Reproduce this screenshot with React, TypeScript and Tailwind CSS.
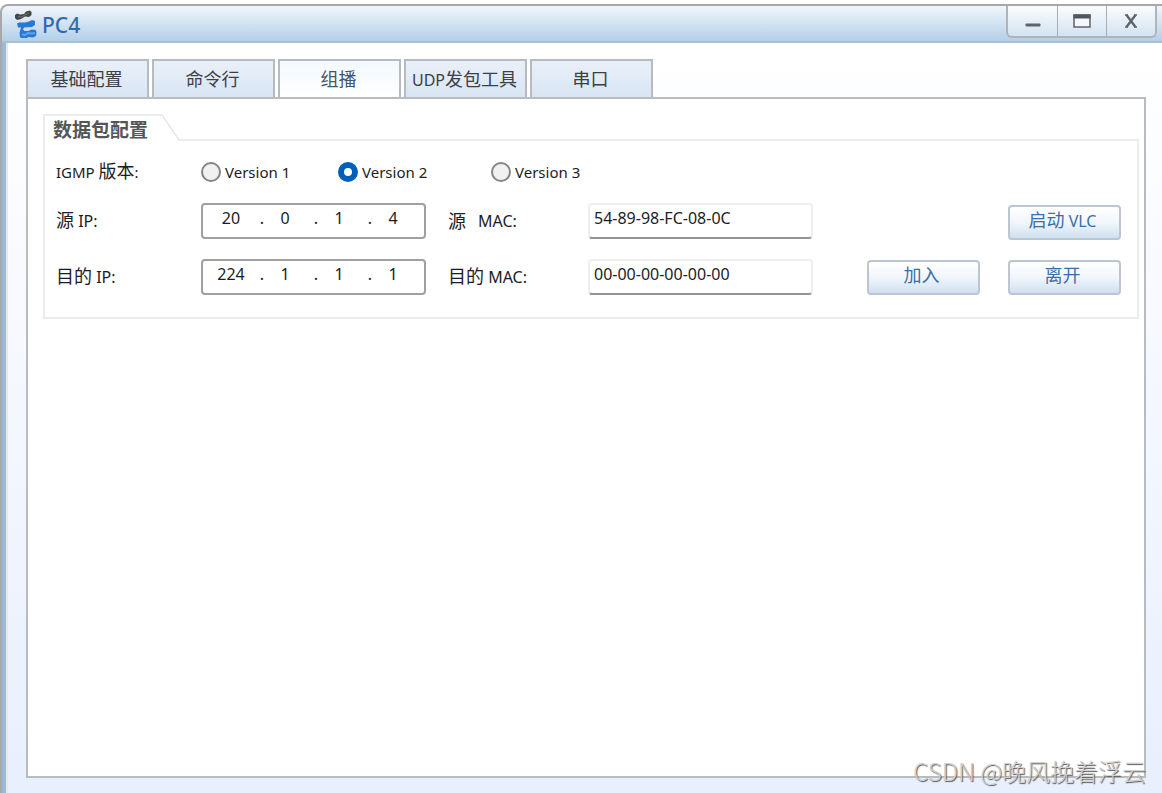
import { useState, type ReactNode } from "react";

const TABS = ["基础配置", "命令行", "组播", "UDP发包工具", "串口"];
const VERSIONS = ["Version 1", "Version 2", "Version 3"];

function Logo() {
  return (
    <svg width="24" height="28" viewBox="0 0 24 28" aria-hidden="true">
      <path d="M1 5 3 3.500l3 1 4-.5 2-2.500L16 .5l1.500 1.500v3L15 7l-4-.5L7 9 3 10 1 8z" fill="#474747" />
      <path d="m4 6.500 4 .5 4-3 3-.5" fill="none" stroke="#707070" strokeWidth="1" />
      <path d="M3 13.500 5 12.500h6l4-1 3-1.500 3 1v4l-3 2-8 .5-1 2 1.500 1.500h4l3-1.500 4 .5 1 2-.5 4-3 1.500-5-.5-2 2H8l-2-2-.5-4L7 17.500H4z" fill="#2a78d4" />
      <path d="m8 24.500 3 .500 3-2 4 .500 3-.5" fill="none" stroke="#5aa6f5" strokeWidth="2" />
    </svg>
  );
}

function Cjk({ children }: { children: ReactNode }) {
  return <span className="text-lg leading-5">{children}</span>;
}

function CaptionButton({ label, children }: { label: string; children: ReactNode }) {
  return (
    <button
      type="button"
      aria-label={label}
      className="flex w-[49px] items-center justify-center border-l border-[#a9acb0] first:border-l-0"
    >
      {children}
    </button>
  );
}

function ActionButton({ children }: { children: ReactNode }) {
  return (
    <button
      type="button"
      className="h-[35px] w-[113px] rounded-sm border-2 border-[#bcc5d2] bg-linear-to-b from-white via-[#f1f6fb] to-[#cfe0f0] pr-1 pb-1 text-base leading-5 text-[#3a6ea8]"
    >
      {children}
    </button>
  );
}

function IpInput({ label, value }: { label: string; value: string }) {
  const [parts, setParts] = useState(value.split("."));

  return (
    <div
      role="group"
      aria-label={label}
      className="flex h-9 w-[225px] items-center rounded-sm border-2 border-[#a0a0a0] bg-white pb-1.5 pl-[7px] text-base"
    >
      {parts.map((part, i) => (
        <div key={i} className="flex items-center">
          {i > 0 ? <span className="w-3 text-right">.</span> : null}
          <input
            aria-label={`${label} ${i + 1}`}
            value={part}
            maxLength={3}
            onChange={(e) => setParts(parts.map((p, n) => (n === i ? e.target.value : p)))}
            className="w-[42px] text-center outline-none"
          />
        </div>
      ))}
    </div>
  );
}

function MacInput({ id, value }: { id: string; value: string }) {
  return (
    <input
      id={id}
      defaultValue={value}
      className="h-9 w-[225px] rounded-sm border-2 border-[#efefef] border-b-[#949494] bg-white pb-1.5 pl-1 text-base outline-none"
    />
  );
}

export default function App() {
  const [tab, setTab] = useState(2);
  const [version, setVersion] = useState(1);

  return (
    <div className="relative flex min-h-screen flex-col bg-white pt-1 font-['Noto_Sans','Noto_Sans_CJK_SC',sans-serif] text-[15px] text-[#1c1c24]">
      <div className="flex flex-1 flex-col rounded-tl-lg border-t-2 border-l-2 border-[#a8a8a8] bg-[#9bb9d2]">
        <header className="flex h-[37px] justify-between rounded-tl-md border-b-2 border-[#a9bfd2] bg-linear-to-b from-[#f1f5fb] to-[#b3d0e8] pr-[5px]">
          <div className="flex items-center gap-1 pl-3">
            <Logo />
            <h1 className="pt-0.5 text-[21px] leading-8 font-medium text-[#2f6cae]">PC4</h1>
          </div>
          <div className="flex h-8 rounded-b-md border-2 border-t-0 border-[#b0b3b8] bg-linear-to-b from-[#fbfcfe] to-[#d3e3f1]">
            <CaptionButton label="最小化">
              <svg width="16" height="14" viewBox="0 0 16 14">
                <rect x="0.5" y="9.5" width="15" height="3" rx="1" fill="#5e636b" />
              </svg>
            </CaptionButton>
            <CaptionButton label="最大化">
              <svg width="18" height="14" viewBox="0 0 18 14">
                <rect x="1" y="1" width="16" height="12" fill="#f4f7fb" stroke="#5e636b" strokeWidth="1.5" />
                <rect x="0.5" y="0.5" width="17" height="4" fill="#50545b" />
              </svg>
            </CaptionButton>
            <CaptionButton label="关闭">
              <svg width="14" height="14" viewBox="0 0 14 14">
                <path d="M1 1h3M10 1h3M1 13h3M10 13h3" stroke="#5e636b" strokeWidth="1.5" />
                <path d="m2.5 1 9 12M11.500 1l-9 12" stroke="#5e636b" strokeWidth="2.4" />
              </svg>
            </CaptionButton>
          </div>
        </header>

        <main className="ml-1 flex flex-1 flex-col border-l-2 border-[#e3e9ef] bg-linear-to-b from-white to-[#e8effd] pt-4 pr-4 pb-[15px] pl-[18px]">
          <div role="tablist" className="flex gap-[3px]">
            {TABS.map((name, i) => (
              <button
                key={name}
                type="button"
                role="tab"
                aria-selected={tab === i}
                onClick={() => setTab(i)}
                className={`h-[38px] w-[123px] border-2 border-b-0 border-[#b6bbc0] bg-linear-to-b pr-0.5 text-lg leading-6 whitespace-nowrap ${
                  tab === i
                    ? "from-[#f3f9fe] to-white text-[#42566b]"
                    : "from-[#eaf0f8] to-[#d8e5f4] text-[#3b3f46]"
                }`}
              >
                {name.startsWith("UDP") ? (
                  <>
                    <span className="text-base">UDP</span>
                    {name.slice(3)}
                  </>
                ) : (
                  name
                )}
              </button>
            ))}
          </div>

          <div role="tabpanel" className="flex-1 border-2 border-[#b9bcbe] bg-white pt-[15px] pr-[5px] pl-[15px]">
            <div className="flex h-[27px]">
              <h2 className="w-[119px] border-t-2 border-l-2 border-[#ebebeb] pt-0.5 pl-2 text-[19px] leading-6 font-bold whitespace-nowrap text-[#555]">
                数据包配置
              </h2>
              <svg width="18" height="27" viewBox="0 0 18 27" aria-hidden="true">
                <path d="M0 1 17 26h1" fill="none" stroke="#e6e6e6" strokeWidth="1.500" />
              </svg>
              <div className="flex-1 border-b-2 border-[#ebebeb]" />
            </div>

            <form className="border-2 border-t-0 border-[#ebebeb] pr-4 pb-[22px] pl-[11px]">
              <div
                role="radiogroup"
                aria-label="IGMP 版本"
                className="grid h-[62px] grid-cols-[145px_137px_153px_auto] items-center"
              >
                <span>
                  IGMP <Cjk>版本</Cjk>:
                </span>
                {VERSIONS.map((name, i) => (
                  <label key={name} className="flex items-center gap-1">
                    <input
                      type="radio"
                      name="igmp"
                      checked={version === i}
                      onChange={() => setVersion(i)}
                      className="size-5 appearance-none rounded-full border-2 border-[#858585] bg-[#f1f1f1] checked:border-[6px] checked:border-[#005fb8] checked:bg-white"
                    />
                    {name}
                  </label>
                ))}
              </div>

              <div className="flex items-start justify-between">
                <div className="grid grid-cols-[145px_247px_140px_225px] auto-rows-[36px] items-center gap-y-5 text-base">
                  <span>
                    <Cjk>源</Cjk> IP:
                  </span>
                  <IpInput label="源 IP" value="20.0.1.4" />
                  <label htmlFor="src-mac" className="flex items-center gap-3">
                    <Cjk>源</Cjk> MAC:
                  </label>
                  <MacInput id="src-mac" value="54-89-98-FC-08-0C" />
                  <span>
                    <Cjk>目的</Cjk> IP:
                  </span>
                  <IpInput label="目的 IP" value="224.1.1.1" />
                  <label htmlFor="dst-mac">
                    <Cjk>目的</Cjk> MAC:
                  </label>
                  <MacInput id="dst-mac" value="00-00-00-00-00-00" />
                </div>
                <div className="grid grid-cols-2 items-center gap-x-7 gap-y-5 pt-0.5">
                  <div className="col-start-2 flex">
                    <ActionButton>
                      <Cjk>启动</Cjk> VLC
                    </ActionButton>
                  </div>
                  <ActionButton>
                    <Cjk>加入</Cjk>
                  </ActionButton>
                  <ActionButton>
                    <Cjk>离开</Cjk>
                  </ActionButton>
                </div>
              </div>
            </form>
          </div>
        </main>
      </div>

      <p className="absolute right-4 bottom-1 font-['Noto_Sans_CJK_SC',sans-serif] text-2xl leading-9 font-light text-[#d0d0d0] [text-shadow:1px_1px_1px_#555]">
        CSDN @晚风挽着浮云
      </p>
    </div>
  );
}
